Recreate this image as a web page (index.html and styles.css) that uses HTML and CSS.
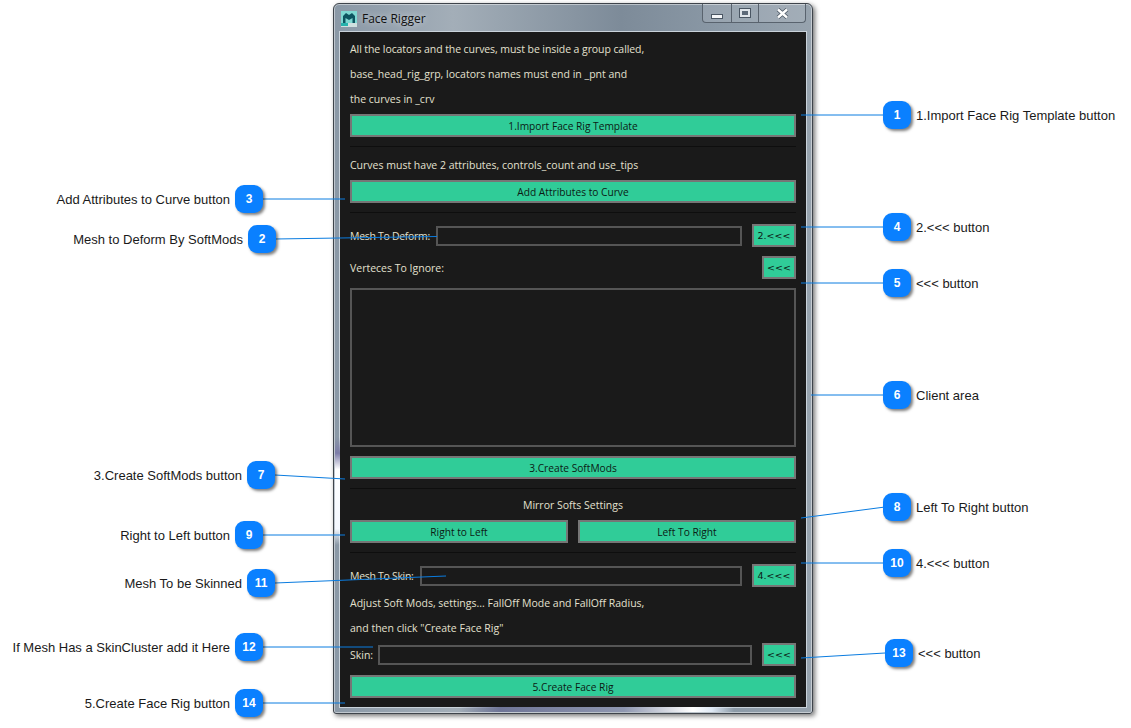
FILE: index.html

```html
<!doctype html>
<html lang="en">
  <head>
    <meta charset="utf-8">
    <title>Face Rigger</title>
    <link rel="stylesheet" href="styles.css">
  </head>
  <body>
    <div class="canvas">
      <svg class="leaders" width="1131" height="728">
        <line x1="801" y1="115" x2="885" y2="115"/>
        <line x1="345" y1="199" x2="262" y2="199"/>
        <line x1="437" y1="236.5" x2="275" y2="239"/>
        <line x1="801" y1="227" x2="885" y2="227"/>
        <line x1="801" y1="283" x2="885" y2="283"/>
        <line x1="811" y1="395" x2="885" y2="395"/>
        <line x1="345" y1="479" x2="275" y2="475"/>
        <line x1="801" y1="518" x2="885" y2="507"/>
        <line x1="345" y1="535" x2="262" y2="535"/>
        <line x1="801" y1="563" x2="885" y2="563"/>
        <line x1="446" y1="576" x2="275" y2="583"/>
        <line x1="373" y1="647" x2="262" y2="647"/>
        <line x1="801" y1="658" x2="885" y2="653"/>
        <line x1="345" y1="703" x2="262" y2="703"/>
      </svg>

      <div class="window">
        <div class="titlebar">
          <svg class="app-icon" width="16" height="16" viewBox="0 0 16 16">
            <rect width="16" height="16" fill="#7fd8d2"/>
            <rect y="12" width="16" height="4" fill="#cfe0df"/>
            <rect y="12" width="7" height="3" fill="#27b3ad"/>
            <path d="M2 12V5l3-3 3 2 3-2 3 3v7h-2.500V7L8 9 4.500 7v5z" fill="#0d5560"/>
          </svg>
          <span class="title">Face Rigger</span>
          <div class="controls">
            <div class="ctl ctl-min"><span class="glyph-min"></span></div>
            <div class="ctl ctl-max"><span class="glyph-max"></span></div>
            <div class="ctl ctl-close">
              <svg width="13" height="11" viewBox="0 0 13 11"><path d="M2 1.500l9 8M11 1.500l-9 8" stroke="#4a5663" stroke-width="4"/><path d="M2 1.500l9 8M11 1.500l-9 8" stroke="#fff" stroke-width="2.400"/></svg>
            </div>
          </div>
        </div>

        <div class="client">
          <p class="line line-first">All the locators and the curves, must be inside a group called,</p>
          <p class="line">base_head_rig_grp, locators names must end in _pnt and</p>
          <p class="line">the curves in _crv</p>
          <button class="btn btn-first">1.Import Face Rig Template</button>
          <hr class="sep sep-a">
          <p class="line line-curves">Curves must have 2 attributes, controls_count and use_tips</p>
          <button class="btn">Add Attributes to Curve</button>
          <hr class="sep sep-b">
          <div class="row row-deform">
            <label>Mesh To Deform:</label>
            <div class="field"></div>
            <button class="btn btn-small btn-wide">2.&lt;&lt;&lt;</button>
          </div>
          <div class="row row-ignore">
            <label>Verteces To Ignore:</label>
            <button class="btn btn-small">&lt;&lt;&lt;</button>
          </div>
          <div class="textarea"></div>
          <button class="btn">3.Create SoftMods</button>
          <hr class="sep sep-c">
          <p class="line center">Mirror Softs Settings</p>
          <div class="pair">
            <button class="btn">Right to Left</button>
            <button class="btn">Left To Right</button>
          </div>
          <hr class="sep sep-d">
          <div class="row row-skin">
            <label>Mesh To Skin:</label>
            <div class="field"></div>
            <button class="btn btn-small btn-wide">4.&lt;&lt;&lt;</button>
          </div>
          <p class="line line-adjust">Adjust Soft Mods, settings... FallOff Mode and FallOff Radius,</p>
          <p class="line">and then click "Create Face Rig"</p>
          <div class="row row-s">
            <label>Skin:</label>
            <div class="field field-s"></div>
            <button class="btn btn-small">&lt;&lt;&lt;</button>
          </div>
          <button class="btn btn-last">5.Create Face Rig</button>
        </div>
      </div>

      <div class="note right n1"><span class="badge">1</span><span class="text">1.Import Face Rig Template button</span></div>
      <div class="note left n3"><span class="text">Add Attributes to Curve button</span><span class="badge">3</span></div>
      <div class="note left n2"><span class="text">Mesh to Deform By SoftMods</span><span class="badge">2</span></div>
      <div class="note right n4"><span class="badge">4</span><span class="text">2.&lt;&lt;&lt; button</span></div>
      <div class="note right n5"><span class="badge">5</span><span class="text">&lt;&lt;&lt; button</span></div>
      <div class="note right n6"><span class="badge">6</span><span class="text">Client area</span></div>
      <div class="note left n7"><span class="text">3.Create SoftMods button</span><span class="badge">7</span></div>
      <div class="note right n8"><span class="badge">8</span><span class="text">Left To Right button</span></div>
      <div class="note left n9"><span class="text">Right to Left button</span><span class="badge">9</span></div>
      <div class="note right n10"><span class="badge">10</span><span class="text">4.&lt;&lt;&lt; button</span></div>
      <div class="note left n11"><span class="text">Mesh To be Skinned</span><span class="badge">11</span></div>
      <div class="note left n12"><span class="text">If Mesh Has a SkinCluster add it Here</span><span class="badge">12</span></div>
      <div class="note right n13"><span class="badge">13</span><span class="text">&lt;&lt;&lt; button</span></div>
      <div class="note left n14"><span class="text">5.Create Face Rig button</span><span class="badge">14</span></div>
    </div>
  </body>
</html>
```

FILE: styles.css

```css
* {
    box-sizing: border-box;
}
html, body {
    margin: 0;
    background: #fff;
}
.canvas {
    position: relative;
    width: 1131px;
    height: 728px;
    overflow: hidden;
    font-family: "Liberation Sans", Arial, sans-serif;
}

/* callouts */
.leaders {
    position: absolute;
    left: 0;
    top: 0;
    z-index: 2;
}
.leaders line {
    stroke: #0a7ce0;
    stroke-width: 1;
}
.note {
    position: absolute;
    z-index: 3;
    display: flex;
    align-items: center;
    gap: 5px;
    height: 28px;
}
.note .text {
    font-size: 13px;
    color: #1a1a1a;
    white-space: nowrap;
}
.right {
    left: 883px;
}
.n1 { top: 101px; }
.n4 { top: 213px; }
.n5 { top: 269px; }
.n6 { top: 381px; }
.n8 { top: 493px; }
.n10 { top: 549px; }
.n13 { top: 639px; left: 885px; }
.n3 { top: 185px; right: 868px; }
.n2 { top: 225px; right: 855px; }
.n7 { top: 461px; right: 856px; }
.n9 { top: 521px; right: 868px; }
.n11 { top: 569px; right: 856px; }
.n12 { top: 633px; right: 868px; }
.n14 { top: 689px; right: 868px; }
.badge {
    display: flex;
    align-items: center;
    justify-content: center;
    width: 28px;
    height: 28px;
    border-radius: 9px;
    background: #0a80ff;
    color: #fff;
    font-size: 12px;
    font-weight: bold;
    box-shadow: 2px 2px 3px rgba(0, 0, 0, .5);
}

/* window */
.window {
    position: absolute;
    left: 333px;
    top: 3px;
    width: 480px;
    height: 711px;
    z-index: 1;
    border: 1px solid #3e444b;
    border-radius: 6px 6px 3px 3px;
    padding: 0 6px 6px;
    background: linear-gradient(90deg, #8a98a6 0%, #a3aeb8 25%, #7d8b99 60%, #8d9ba8 85%, #97a3ae 100%);
    box-shadow: 2px 2px 5px rgba(0, 0, 0, .55), inset 0 0 0 1px rgba(255, 255, 255, .45);
}
/* reflections of the desktop in the glass frame */
.window::before {
    content: "";
    position: absolute;
    left: 1px;
    top: 433px;
    width: 5px;
    height: 108px;
    background: linear-gradient(180deg, rgba(120, 120, 170, 0), #7c7ca8 15%, #fff 30%, #f4f8ff 85%, rgba(150, 160, 200, 0));
}
.window::after {
    content: "";
    position: absolute;
    left: 125px;
    bottom: 1px;
    width: 275px;
    height: 5px;
    background: linear-gradient(90deg, rgba(110, 115, 160, 0), #6f7597 15%, #8f97b0 60%, #fff 85%, #dfe9f5 92%, rgba(255, 255, 255, 0));
}
.titlebar {
    display: flex;
    align-items: flex-start;
    height: 28px;
    padding: 7px 0 0 1px;
}
.app-icon {
    flex: none;
}
.title {
    margin-left: 5px;
    font-family: "Open Sans", sans-serif;
    font-size: 12px;
    line-height: 15px;
    color: #111;
    text-shadow: 0 0 6px rgba(255, 255, 255, .7);
}
.controls {
    display: flex;
    height: 19px;
    margin: -7px 0 0 auto;
    border: 1px solid #59636e;
    border-top: 0;
    border-radius: 0 0 4px 4px;
    background: rgba(255, 255, 255, .12);
}
.ctl {
    display: flex;
    align-items: center;
    justify-content: center;
    height: 18px;
    border-left: 1px solid #59636e;
}
.ctl-min {
    width: 28px;
    border-left: 0;
}
.ctl-max {
    width: 27px;
}
.ctl-close {
    width: 47px;
}
.glyph-min {
    width: 12px;
    height: 5px;
    margin-top: 6px;
    background: #f4f6f8;
    border: 1px solid #4a5663;
}
.glyph-max {
    width: 12px;
    height: 10px;
    background: #5c6a78;
    border: 3px solid #dfe5ea;
    outline: 1px solid #4a5663;
    outline-offset: -1px;
}

.client {
    height: 675px;
    padding: 5px 10px 0;
    background: #1a1a1a;
    outline: 1px solid #c9d2da;
    color: #e3e0cf;
    font-family: "Open Sans", sans-serif;
    font-size: 10.5px;
}
.line {
    margin: 0;
    height: 25px;
    line-height: 25px;
    white-space: nowrap;
}
.line-first {
    letter-spacing: -.08px;
}
.center {
    text-align: center;
    margin-top: 4px;
}
.btn {
    display: block;
    width: 100%;
    height: 23px;
    padding: 0;
    background: #30cc98;
    border: 2px solid #767676;
    color: #0c1a14;
    font-family: "Open Sans", sans-serif;
    font-size: 10.2px;
}
.btn-first {
    margin-top: 2px;
}
.sep {
    height: 1px;
    margin: 0;
    border: 0;
    background: #0e0e0e;
}
.sep-a {
    margin-top: 9px;
}
.line-curves {
    margin-top: 6px;
    margin-bottom: 2px;
}
.sep-b, .sep-c, .sep-d {
    margin-top: 9px;
}
.row {
    display: flex;
    align-items: center;
    white-space: nowrap;
}
.row label {
    flex: none;
}
.row-deform {
    margin-top: 11px;
    height: 23px;
}
.row-deform label {
    width: 84px;
    letter-spacing: -.3px;
}
.row-skin label {
    width: 68px;
    letter-spacing: -.3px;
}
.row-ignore {
    margin-top: 9px;
    justify-content: space-between;
    height: 23px;
}
.field {
    flex: 1;
    height: 20px;
    margin-left: 2px;
    border: 2px solid #555;
}
.btn-small {
    flex: none;
    width: 34px;
    font-family: "DejaVu Sans", sans-serif;
    font-size: 9.5px;
}
.btn-wide {
    width: 44px;
    margin-left: 10px;
}
.row-s .btn-small {
    margin-left: 10px;
}
.textarea {
    height: 159px;
    margin-top: 9px;
    margin-bottom: 9px;
    border: 2px solid #555;
}
.pair {
    display: flex;
    gap: 10px;
    margin-top: 2px;
}
.row-skin {
    margin-top: 11px;
    height: 23px;
}
.line-adjust {
    margin-top: 4px;
}
.row-s {
    height: 23px;
    margin-top: 2px;
}
.field-s {
    margin-left: 5px;
}
.btn-last {
    margin-top: 9px;
}
```
